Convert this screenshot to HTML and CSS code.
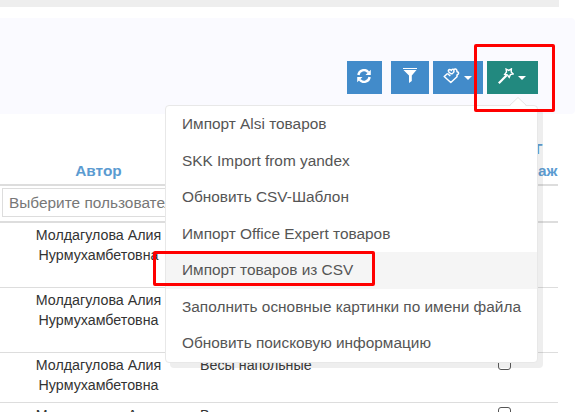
FILE: index.html
```html
<!DOCTYPE html>
<html lang="ru">
<head>
<meta charset="utf-8">
<title>Товары</title>
<link rel="stylesheet" href="styles.css">
</head>
<body>
<div class="topbar"></div>
<header class="toolbar">
  <button class="btn refresh" aria-label="refresh"><svg width="14" height="14" viewBox="0 0 14 14"><path d="M1.4 6A5.6 5.6 0 0 1 11.3 3.2M12.6 8A5.6 5.6 0 0 1 2.7 10.8" fill="none" stroke="#fff" stroke-width="2.4"/><path d="M13.8.7V6H8.5zM.2 13.3V8h5.3z" fill="#fff"/></svg></button>
  <button class="btn filter" aria-label="filter"><svg width="14" height="15" viewBox="0 0 14 15"><path d="M0 0h14v1H0zM.5 2h13L8.8 7.4V13L6 15V7.4z" fill="#fff"/></svg></button>
  <button class="btn tags" aria-label="tags"><svg width="17" height="16" viewBox="0 0 17 16"><path d="M4.500 5.500 1.200 8.500l6.600 6 6.200-5.800V7q2-.8 1.500-2.300-.5-1.100-1.500-1 .2-2-1.300-2.700-1.200-.3-2.200.8M4.500 5.500 7.300 8M5.500 3.700Q5 1.500 6.800 1.400 8.600 1.600 8.600 3.300M8.600 1.700Q10.600.7 11 2.600q.2 1.600-1 2.100M5.500 3.700l2.300 2Q9.400 6.200 10 4.700" fill="none" stroke="#fff" stroke-width="1.5" stroke-linejoin="round"/></svg><i class="caret"></i></button>
  <button class="btn tools" aria-label="tools"><svg width="16" height="16" viewBox="0 0 16 16"><path d="M.8 15.2 8.7 7.3" stroke="#fff" stroke-width="2.2"/><path d="m8.1 1 2.6 1.400L13.400.9l-.2 3 2 2-2.800.7-1.200 2.700-1.800-2.500-2.700-.4 1.800-2.400z" fill="none" stroke="#fff" stroke-width="1.4"/></svg><i class="caret"></i></button>
</header>
<table class="grid">
  <colgroup><col class="c-gap"><col class="c-author"><col class="c-name"><col class="c-check"><col class="c-end"></colgroup>
  <thead>
    <tr class="titles"><th></th><th>Автор</th><th></th><th></th><th class="last"><span class="upper">Т</span>аж</th></tr>
    <tr class="filters"><td colspan="5"><input class="user" placeholder="Выберите пользователя"></td></tr>
  </thead>
  <tbody>
    <tr class="tall"><td></td><td class="author">Молдагулова Алия<br>Нурмухамбетовна</td><td></td><td></td><td></td></tr>
    <tr class="tall"><td></td><td class="author">Молдагулова Алия<br>Нурмухамбетовна</td><td></td><td></td><td></td></tr>
    <tr class="short"><td></td><td class="author">Молдагулова Алия<br>Нурмухамбетовна</td><td class="name">Весы напольные</td><td><i class="box"></i></td><td></td></tr>
    <tr class="short"><td></td><td class="author">Молдагулова Алия</td><td class="name">Весы напольные</td><td><i class="box"></i></td><td></td></tr>
  </tbody>
</table>
<ul class="menu">
  <li><span>Импорт Alsi товаров</span></li>
  <li><span>SKK Import from yandex</span></li>
  <li><span>Обновить CSV-Шаблон</span></li>
  <li><span>Импорт Office Expert товаров</span></li>
  <li class="active"><span>Импорт товаров из CSV</span></li>
  <li><span>Заполнить основные картинки по имени файла</span></li>
  <li><span>Обновить поисковую информацию</span></li>
</ul>
<svg class="pointer" width="18" height="9" viewBox="0 0 18 9"><path d="M1 9 9 .7 17 9z" fill="#fff"/><path d="M.5 8.500 9 .5l8.500 8" fill="none" stroke="#e5e5e5"/></svg>
<div class="mark mark-button"></div>
<div class="mark mark-item"></div>
</body>
</html>
```

FILE: styles.css
```css
* { box-sizing: border-box; }
html { overflow: hidden; }
body { margin: 0; width: 578px; height: 412px; overflow: hidden; position: relative; background: #fff; font-family: "Liberation Sans", Arial, sans-serif; font-size: 14.25px; color: #333; }
.topbar { width: 559px; height: 7px; background: #eee; }
.toolbar { margin-top: 11px; width: 575px; height: 96px; padding: 43px 37px 0 0; display: flex; justify-content: flex-end; align-items: flex-start; background: #fafaff; border-radius: 0 4px 4px 0; }
.btn { height: 33px; border: 0; padding: 7px 0 0 10px; background: #428bca; display: flex; align-items: flex-start; }
.refresh { width: 35px; margin-right: 9px; padding-top: 8px; }
.filter { width: 38px; margin-right: 4px; padding-left: 12px; }
.tags { width: 50px; margin-right: 4px; }
.tools { width: 51px; padding-left: 11px; background: #22897f; }
.caret { margin: 8px 0 0 4px; border: 4px solid transparent; border-top-color: #fff; border-bottom: 0; }
.grid { width: 558px; table-layout: fixed; border-collapse: separate; border-spacing: 0; }
.c-gap { width: 30px; } .c-author { width: 137px; } .c-name { width: 331px; } .c-check { width: 40px; }
.grid th, .grid td { padding: 0; vertical-align: top; }
.titles { height: 72px; }
.titles th { border-bottom: 2px solid #ddd; vertical-align: bottom; padding-bottom: 2px; line-height: 22px; font-size: 15.4px; color: #5b9bd1; }
.titles .last { text-align: left; }
.upper { display: block; margin-left: -5px; }
.filters { height: 37px; }
.filters td { border-bottom: 2px solid #ddd; padding: 2px 0 0 2px; }
.user { display: block; width: 195px; height: 29px; padding: 0 6px; border: 1px solid #ddd; font: 15.4px "Liberation Sans", Arial, sans-serif; color: #777; }
.user::placeholder { color: #777; }
.tall { height: 65px; }
.short { height: 50px; }
tbody td { border-bottom: 1px solid #ddd; line-height: 20px; white-space: nowrap; }
.grid .author, .grid .name { padding-top: 2px; }
.author { text-align: center; }
.grid .name { padding-left: 33px; }
.box { display: block; width: 13px; height: 13px; margin-top: 4px; border: 1.5px solid #555; border-radius: 3px; background: #fff; }
.menu { position: absolute; left: 165px; top: 105px; width: 373px; height: 258px; margin: 0; padding: 0; list-style: none; background: #fff; border: 1px solid #e8e8e8; border-radius: 4px; box-shadow: 5px 5px rgba(102, 102, 102, .11); font-size: 15.4px; color: #555; }
.menu li { height: 36.57px; line-height: 36.4px; padding-left: 16px; white-space: nowrap; }
.menu .active { background: #f5f5f5; }
.pointer { position: absolute; left: 509px; top: 97px; }
.mark { position: absolute; border: 3px solid #f00; border-radius: 2px; }
.mark-button { left: 474px; top: 44px; width: 81px; height: 68px; }
.mark-item { left: 153px; top: 251px; width: 222px; height: 35px; }
```
